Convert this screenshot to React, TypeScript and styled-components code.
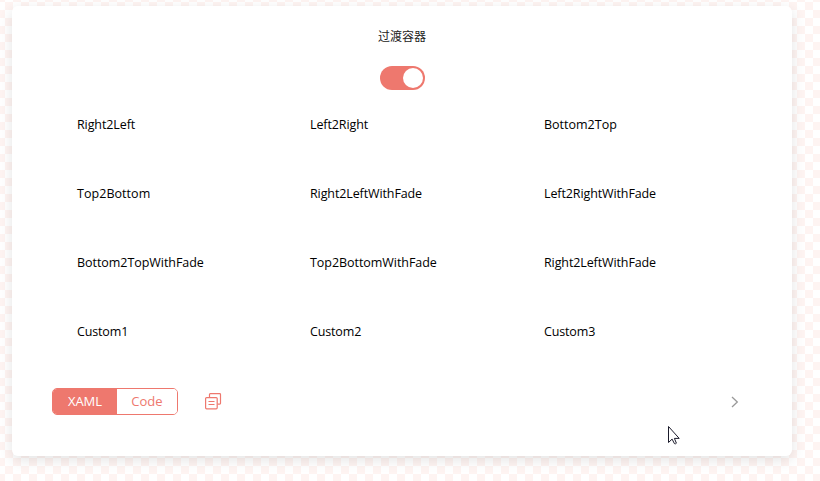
import React from "react";
import styled, { createGlobalStyle } from "styled-components";

const accent = "#ee786e";

const GlobalStyle = createGlobalStyle`
  * { box-sizing: border-box; }
  body { margin: 0; overflow: hidden; }
`;

const Page = styled.div`
  width: 820px;
  height: 481px;
  padding: 6px 28px 25px 12px;
  background: repeating-conic-gradient(#ffffff 0 25%, #fef4f2 0 50%) 5px 2px / 16px 16px;
  font-family: "Open Sans", "Noto Sans CJK SC", sans-serif;
  font-size: 12.5px;
  color: #000;
`;

const Card = styled.main`
  display: flex;
  flex-direction: column;
  align-items: center;
  height: 450px;
  background: #fff;
  border-radius: 6px;
  box-shadow: 0 4px 14px rgba(0, 0, 0, 0.11);
  position: relative;
`;

const Title = styled.h1`
  margin: 21px 0 0;
  font-family: "Noto Sans CJK SC", sans-serif;
  font-size: 12px;
  font-weight: 400;
  line-height: 18px;
  color: #222;
`;

const Toggle = styled.button`
  display: flex;
  justify-content: flex-end;
  align-items: center;
  width: 45px;
  height: 24px;
  margin-top: 21px;
  padding: 0 2px;
  border: 0;
  border-radius: 12px;
  background: ${accent};
`;

const Knob = styled.span`
  width: 20px;
  height: 20px;
  border-radius: 50%;
  background: #fff;
`;

const Grid = styled.section`
  display: grid;
  grid-template-columns: 233px 234px 1fr;
  grid-auto-rows: 69px;
  align-self: stretch;
  height: 276px;
  margin: 1px 0 0 65px;
`;

const Label = styled.div<{ $spacing: number }>`
  padding-top: 25px;
  line-height: 18px;
  white-space: nowrap;
  letter-spacing: ${(p) => p.$spacing}px;
`;

const Footer = styled.footer`
  display: flex;
  align-items: center;
  align-self: stretch;
  height: 27px;
  margin: 21px 52px 0 40px;
`;

const Segments = styled.div`
  display: flex;
  width: 126px;
  height: 27px;
  border: 1px solid ${accent};
  border-radius: 5px;
  overflow: hidden;
`;

const Segment = styled.button<{ $active?: boolean }>`
  width: ${(p) => (p.$active ? 64 : 60)}px;
  padding: 0;
  border: 0;
  background: ${(p) => (p.$active ? accent : "#fff")};
  color: ${(p) => (p.$active ? "#fff" : accent)};
  font: inherit;
  font-size: 13px;
  line-height: 25px;
`;

const CopyIcon = styled.svg`
  margin-left: 27px;
`;

const Chevron = styled.svg`
  margin-left: auto;
`;

const Cursor = styled.svg`
  position: absolute;
  left: 655px;
  top: 419px;
`;

const labels: [string, number][] = [
  ["Right2Left", -0.1], ["Left2Right", -0.1], ["Bottom2Top", 0],
  ["Top2Bottom", 0.05], ["Right2LeftWithFade", -0.11], ["Left2RightWithFade", -0.11],
  ["Bottom2TopWithFade", -0.05], ["Top2BottomWithFade", -0.05], ["Right2LeftWithFade", -0.11],
  ["Custom1", -0.15], ["Custom2", -0.15], ["Custom3", -0.15],
];

export default function App() {
  return (
    <Page>
      <GlobalStyle />
      <Card>
        <Title>过渡容器</Title>
        <Toggle role="switch" aria-checked="true"><Knob /></Toggle>
        <Grid>
          {labels.map(([text, spacing], i) => (
            <Label key={i} $spacing={spacing}>{text}</Label>
          ))}
        </Grid>
        <Footer>
          <Segments>
            <Segment $active>XAML</Segment>
            <Segment>Code</Segment>
          </Segments>
          <CopyIcon width="17" height="17" viewBox="0 0 17 17" fill="none" stroke={accent} strokeWidth="1.2">
            <path d="M4.5 4V1.5q0-.8.8-.8h9.4q.8 0 .8.8v8.8q0 .8-.8.8H12.5" />
            <rect x=".6" y="4.6" width="11.6" height="11.2" rx="1" />
            <path d="M3.5 8.5h6M3.5 11.5h6" />
          </CopyIcon>
          <Chevron width="10" height="12" viewBox="0 0 10 12" fill="none" stroke="#999" strokeWidth="1.3">
            <path d="M2 1l5.3 5L2 11" />
          </Chevron>
        </Footer>
        <Cursor width="15" height="21" viewBox="0 0 15 21" fill="#fff" stroke="#1b1b2b" strokeWidth="1">
          <path d="M1.5 1.5v16l3.6-3.4 2.3 4.5q1 .7 2-.4l-2-4.8h4.8z" />
        </Cursor>
      </Card>
    </Page>
  );
}
